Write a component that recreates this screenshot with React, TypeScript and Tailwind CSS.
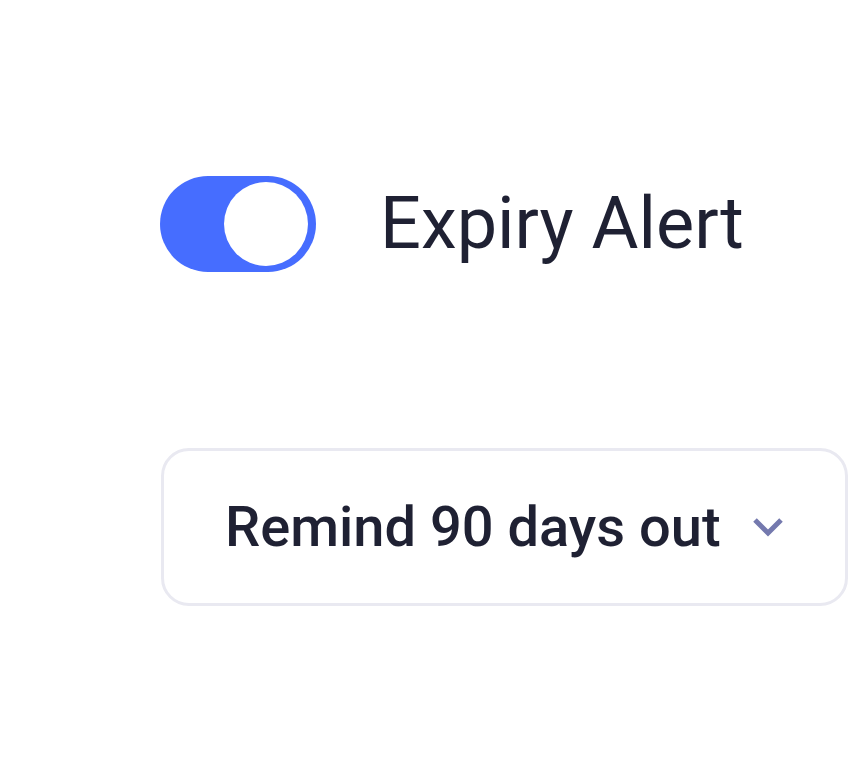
import React from "react";

export default function App() {
  return (
    <div className="min-h-[768px] w-[852px] bg-white" style={{ fontFamily: "Roboto, 'Liberation Sans', sans-serif" }}>
      <div className="flex flex-col pl-[160px] pt-[176px]">
        <div className="flex items-center">
          <button
            type="button"
            className="relative h-[96px] w-[156px] rounded-full bg-[#466dff] shrink-0"
            aria-pressed="true"
          >
            <span className="absolute right-[8px] top-[6px] h-[84px] w-[84px] rounded-full bg-white" />
          </button>
          <span className="ml-[64px] text-[72px] leading-none text-[#1f2133]">Expiry Alert</span>
        </div>
        <div className="mt-[176px] flex h-[158px] w-[687px] items-center rounded-[28px] border-[3px] border-[#e9e9f1] pl-[61px] ml-[1px] box-border">
          <span className="text-[56px] font-medium leading-none text-[#1f2133]">Remind 90 days out</span>
          <svg className="ml-[31px]" width="32" height="20" viewBox="0 0 32 20">
            <polyline points="3,3 16,16 29,3" fill="none" stroke="#7479ae" strokeWidth="5" strokeLinecap="butt" strokeLinejoin="miter" />
          </svg>
        </div>
      </div>
    </div>
  );
}
